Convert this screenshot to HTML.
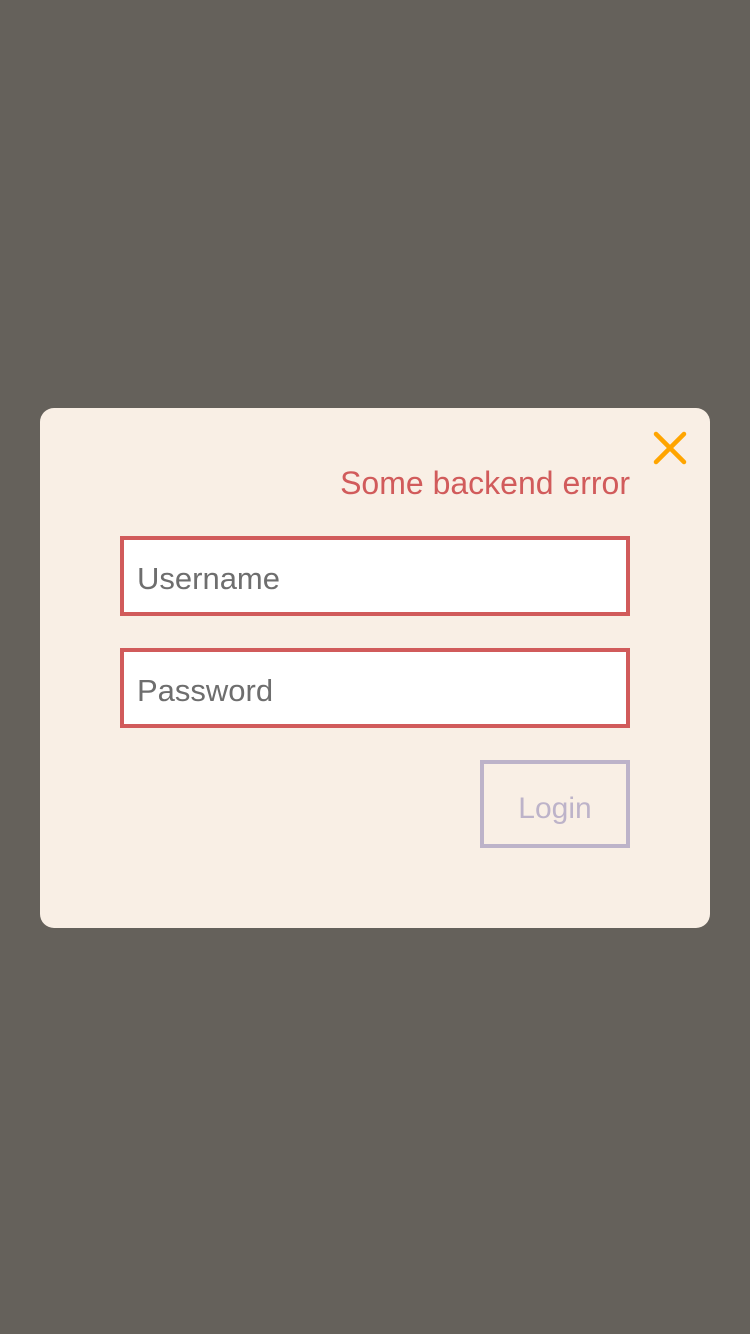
<!DOCTYPE html>
<html><head><style>
body{margin:0;width:750px;height:1334px;background:#65615b;font-family:"Liberation Sans","DejaVu Sans",sans-serif;position:relative;overflow:hidden}
.card{position:absolute;left:40px;top:408px;width:670px;height:520px;background:#f9efe5;border-radius:14px}
.err{position:absolute;right:120px;top:465px;font-size:32px;color:#d15b5b;line-height:36px}
.inp{position:absolute;left:120px;height:72px;background:#fff;border:4px solid #d15b5b;font-size:31px;color:#6e6e6e;line-height:78px;padding-left:13px;box-sizing:content-box;width:489px}
.btn{position:absolute;left:480px;top:760px;width:142px;height:80px;border:4px solid #bdb3c9;font-size:30px;color:#bdb3c9;text-align:center;line-height:90px}
</style></head><body>
<div class="card"></div>
<svg style="position:absolute;left:650px;top:428px" width="40" height="40"><path d="M6 6L34 34M34 6L6 34" stroke="#ffa500" stroke-width="4.5" stroke-linecap="round"/></svg>
<div class="err">Some backend error</div>
<div class="inp" style="top:536px">Username</div>
<div class="inp" style="top:648px">Password</div>
<div class="btn">Login</div>
</body></html>
